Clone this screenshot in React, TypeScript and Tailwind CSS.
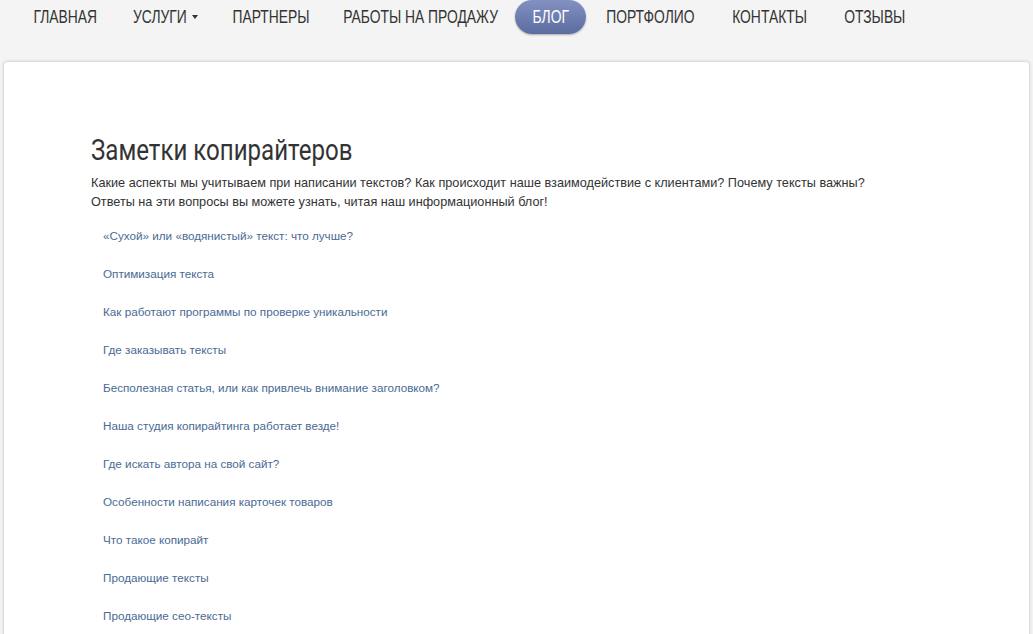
import React from 'react';

const navItems = [
    { label: 'ГЛАВНАЯ', w: 'w-[63px]' },
    { label: 'УСЛУГИ', w: 'w-[54px]', caret: true },
    { label: 'ПАРТНЕРЫ', w: 'w-[75px]' },
    { label: 'РАБОТЫ НА ПРОДАЖУ', w: 'w-[152px]' },
    { label: 'БЛОГ', w: 'w-[35px]', active: true },
    { label: 'ПОРТФОЛИО', w: 'w-[91px]' },
    { label: 'КОНТАКТЫ', w: 'w-[76px]' },
    { label: 'ОТЗЫВЫ', w: 'w-[61px]' },
];

const posts = [
    '«Сухой» или «водянистый» текст: что лучше?',
    'Оптимизация текста',
    'Как работают программы по проверке уникальности',
    'Где заказывать тексты',
    'Бесполезная статья, или как привлечь внимание заголовком?',
    'Наша студия копирайтинга работает везде!',
    'Где искать автора на свой сайт?',
    'Особенности написания карточек товаров',
    'Что такое копирайт',
    'Продающие тексты',
    'Продающие сео-тексты',
];

const App = () => {
    return (
        <div className="min-h-screen bg-[#f4f4f4] font-['Liberation_Sans',sans-serif] text-[#333]">
            {/* narrow caps menu: text squeezed horizontally to imitate a condensed face */}
            <nav className="h-[34px] pl-[16px] flex items-stretch whitespace-nowrap text-[18px] text-[#333]">
                {navItems.map((item) => (
                    <a
                        key={item.label}
                        href="#"
                        className={
                            item.active
                                ? 'flex items-center px-[18px] mr-[1px] rounded-full text-white bg-gradient-to-b from-[#8391c2] to-[#5c6c9f] shadow-[0_1px_2px_rgba(0,0,0,0.3)]'
                                : 'flex items-center px-[18px]'
                        }
                    >
                        <span className={`${item.w} flex justify-center`}>
                            <span className="shrink-0 scale-x-[0.77]">{item.label}</span>
                        </span>
                        {item.caret && (
                            <span className="ml-[5px] inline-block border-x-[3px] border-t-[4px] border-x-transparent border-t-[#333]" />
                        )}
                    </a>
                ))}
            </nav>

            <div className="mt-[27px] mx-[3px] bg-white border border-[#dcdcdc] rounded-[4px] shadow-[0_0_3px_rgba(0,0,0,0.12)] pt-[70px] pb-[20px] pl-[87px] pr-[20px]">
                <h1 className="text-[29px] leading-[36px] font-normal text-[#333] font-['Roboto',sans-serif]">
                    <span className="inline-block origin-left scale-x-[0.83] whitespace-nowrap">Заметки копирайтеров</span>
                </h1>
                <p className="mt-[6px] text-[12.7px] leading-[19px] text-[#333]">
                    Какие аспекты мы учитываем при написании текстов? Как происходит наше взаимодействие с клиентами? Почему тексты важны?
                    <br />
                    Ответы на эти вопросы вы можете узнать, читая наш информационный блог!
                </p>
                <ul className="mt-[14px] pl-[12px] flex flex-col gap-[19px]">
                    {posts.map((p) => (
                        <li key={p} className="text-[11.7px] leading-[19px]">
                            <a href="#" className="text-[#4a6a94] hover:underline">
                                {p}
                            </a>
                        </li>
                    ))}
                </ul>
            </div>
        </div>
    );
};

export default App;
